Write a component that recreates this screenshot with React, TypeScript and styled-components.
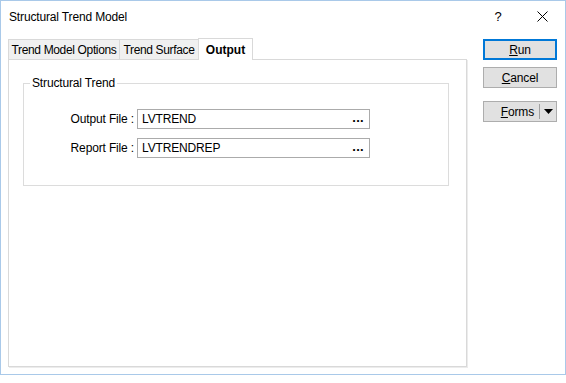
import React from "react";
import styled, { createGlobalStyle } from "styled-components";

const Global = createGlobalStyle`
  html, body { margin: 0; padding: 0; background: #ffffff; }
  body { font-family: "Liberation Sans", Arial, sans-serif; font-size: 12px; color: #000; letter-spacing: -0.15px; }
  * { box-sizing: border-box; }
`;

const Window = styled.div`
  width: 566px;
  height: 375px;
  border: 1px solid #a9c9e9;
  background: #ffffff;
  display: flex;
  flex-direction: column;
`;

const TitleBar = styled.div`
  height: 30px;
  display: flex;
  align-items: center;
  padding-left: 8px;
  font-size: 12px;
`;

const TitleText = styled.div`
  flex: 1;
  padding-top: 1px;
`;

const TitleButton = styled.div<{ $w: number; $shift?: number }>`
  width: ${(p) => p.$w}px;
  height: 30px;
  display: flex;
  align-items: center;
  justify-content: center;
  padding-left: ${(p) => p.$shift ?? 0}px;
  font-size: 13px;
`;

const Body = styled.div`
  flex: 1;
  display: flex;
  padding: 7px 0 0 7px;
`;

const TabArea = styled.div`
  width: 460px;
  display: flex;
  flex-direction: column;
`;

const TabStrip = styled.div`
  display: flex;
  align-items: flex-end;
  height: 21px;
`;

const Tab = styled.div<{ $active?: boolean; $w: number }>`
  width: ${(p) => p.$w}px;
  height: ${(p) => (p.$active ? 22 : 20)}px;
  margin-bottom: ${(p) => (p.$active ? -1 : 0)}px;
  position: relative;
  z-index: ${(p) => (p.$active ? 2 : 1)};
  background: ${(p) => (p.$active ? "#ffffff" : "#f0f0f0")};
  border: 1px solid #d9d9d9;
  border-bottom: none;
  margin-left: -1px;
  display: flex;
  align-items: center;
  justify-content: center;
  white-space: nowrap;
  font-weight: ${(p) => (p.$active ? 700 : 400)};
  font-size: 12px;
  letter-spacing: ${(p) => (p.$active ? "0px" : "-0.35px")};
  padding-top: ${(p) => (p.$active ? 0 : 1)}px;
  &:first-child { margin-left: 0; }
`;

const Panel = styled.div`
  width: 459px;
  height: 308px;
  border: 1px solid #d9d9d9;
  box-shadow: 1px 1px 0 #ececec;
  background: #ffffff;
  padding: 23px 0 0 14px;
`;

const Group = styled.div`
  position: relative;
  width: 426px;
  height: 103px;
  border: 1px solid #dcdcdc;
  padding: 25px 0 0 0;
  display: flex;
  flex-direction: column;
  gap: 9px;
`;

const Legend = styled.div`
  position: absolute;
  top: -8px;
  left: 6px;
  padding: 0 2px 0 2px;
  background: #ffffff;
  font-size: 12px;
  line-height: 14px;
`;

const Row = styled.div`
  display: flex;
  align-items: center;
`;

const Label = styled.div`
  width: 113px;
  text-align: right;
  padding-right: 3px;
  white-space: nowrap;
`;

const FileBox = styled.div`
  width: 233px;
  height: 20px;
  border: 1px solid #ababab;
  display: flex;
  align-items: center;
  padding: 0 5px 0 4px;
  font-size: 12px;
`;

const FileName = styled.span`
  flex: 1;
`;

const Dots = styled.span`
  font-weight: 700;
  font-size: 13px;
  letter-spacing: 0.3px;
  margin-top: -3px;
`;

const ButtonColumn = styled.div`
  margin-left: 15px;
  padding-top: 1px;
  display: flex;
  flex-direction: column;
  width: 74px;
`;

const Button = styled.div<{ $default?: boolean; $gap: number }>`
  height: 21px;
  margin-top: ${(p) => p.$gap}px;
  background: #e1e1e1;
  border: ${(p) => (p.$default ? "2px solid #0078d7" : "1px solid #adadad")};
  display: flex;
  align-items: center;
  justify-content: center;
  font-size: 12px;
`;

const Under = styled.span`
  text-decoration: underline;
`;

const SplitButton = styled(Button)`
  justify-content: flex-end;
  padding-right: 3px;
`;

const SplitSep = styled.div`
  width: 1px;
  height: 15px;
  background: #a0a0a0;
  margin: 0 4px 0 5px;
`;

export default function App() {
  return (
    <>
      <Global />
      <Window>
        <TitleBar>
          <TitleText>Structural Trend Model</TitleText>
          <TitleButton $w={46} $shift={4}>?</TitleButton>
          <TitleButton $w={46}>
            <svg width="11" height="11" viewBox="0 0 11 11">
              <path d="M0.5 0.5 L10.5 10.5 M10.5 0.5 L0.5 10.5" stroke="#000" strokeWidth="1" fill="none" />
            </svg>
          </TitleButton>
        </TitleBar>
        <Body>
          <TabArea>
            <TabStrip>
              <Tab $w={112}>Trend Model Options</Tab>
              <Tab $w={80}>Trend Surface</Tab>
              <Tab $w={55} $active>Output</Tab>
            </TabStrip>
            <Panel>
              <Group>
                <Legend>Structural Trend</Legend>
                <Row>
                  <Label>Output File :</Label>
                  <FileBox>
                    <FileName>LVTREND</FileName>
                    <Dots>...</Dots>
                  </FileBox>
                </Row>
                <Row>
                  <Label>Report File :</Label>
                  <FileBox>
                    <FileName>LVTRENDREP</FileName>
                    <Dots>...</Dots>
                  </FileBox>
                </Row>
              </Group>
            </Panel>
          </TabArea>
          <ButtonColumn>
            <Button $default $gap={0}>
              <span><Under>R</Under>un</span>
            </Button>
            <Button $gap={7}>
              <span><Under>C</Under>ancel</span>
            </Button>
            <SplitButton $gap={13}>
              <span><Under>F</Under>orms</span>
              <SplitSep />
              <svg width="9" height="5" viewBox="0 0 9 5">
                <path d="M0 0 L9 0 L4.5 5 Z" fill="#000" />
              </svg>
            </SplitButton>
          </ButtonColumn>
        </Body>
      </Window>
    </>
  );
}
